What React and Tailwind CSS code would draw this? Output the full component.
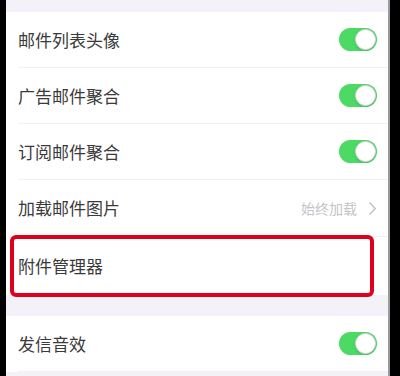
// App.jsx － 邮箱设置列表（附件管理器标注）
const font = { fontFamily: '"Noto Sans CJK SC", "Noto Sans", sans-serif' };

function Toggle() {
  return (
    <div className="relative w-[38px] h-[23px] rounded-full bg-[#4cd964]">
      <div className="absolute right-[1px] top-[1px] w-[21px] h-[21px] rounded-full bg-white border border-[#d8d8d8] shadow-sm" />
    </div>
  );
}

function Row({ label, children, last, h = "h-[56px]" }) {
  return (
    <div className="pl-[12px] bg-white">
      <div
        className={
          "flex items-center justify-between pr-[11px] " +
          h +
          (last ? "" : " border-b border-[#f1f1f4]")
        }
      >
        <span className="text-[17px] text-[#3a3a3a]">{label}</span>
        {children}
      </div>
    </div>
  );
}

export default function App() {
  return (
    <div className="w-[400px] h-[376px] overflow-hidden flex bg-black" style={font}>
      {/* 左侧黑边 */}
      <div className="w-[6px] bg-black" />

      {/* 设置内容 */}
      <div className="w-[382px] bg-[#f4f2f8] flex flex-col">
        <div className="h-[12px] shrink-0" />
        <Row label="邮件列表头像">
          <Toggle />
        </Row>
        <Row label="广告邮件聚合">
          <Toggle />
        </Row>
        <Row label="订阅邮件聚合">
          <Toggle />
        </Row>
        <Row label="加载邮件图片" h="h-[57px]">
          <div className="flex items-center gap-[11px]">
            <span className="text-[14px] text-[#c4c4c8]">始终加载</span>
            <svg width="9" height="15" viewBox="0 0 9 15" fill="none">
              <path d="M1.5 1.5 L7.2 7.5 L1.5 13.5" stroke="#c4c4c8" strokeWidth="1.6" />
            </svg>
          </div>
        </Row>
        <div className="relative">
          <Row label="附件管理器" last h="h-[58px]" />
          {/* 红色标注框 */}
          <div className="absolute left-[4px] top-[-2px] w-[364px] h-[62px] border-[4px] border-[#e0001b] rounded-[6px]" />
        </div>
        <div className="h-[21px] shrink-0" />
        <Row label="发信音效">
          <Toggle />
        </Row>
      </div>

      {/* 右侧黑边 */}
      <div className="w-[2px] bg-[#9a9a9a]" />
      <div className="flex-1 bg-black" />
    </div>
  );
}
